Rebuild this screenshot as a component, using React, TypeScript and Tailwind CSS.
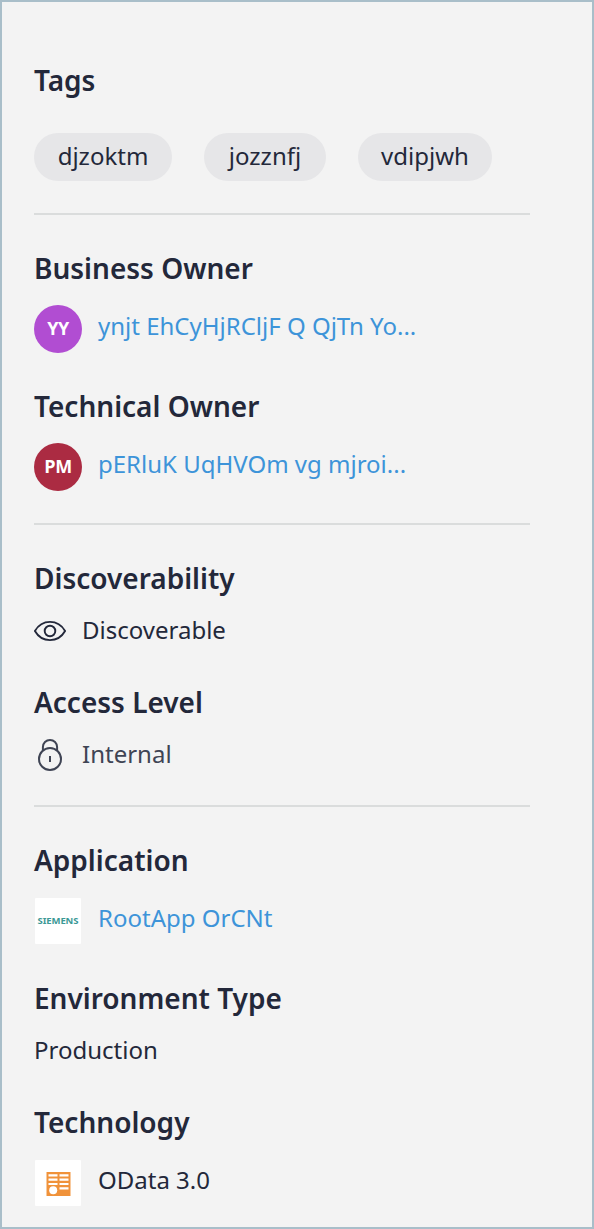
import type { ReactNode } from "react";

function Heading({ children }: { children: ReactNode }) {
  return <h2 className="h-10 text-[28px] leading-10 font-semibold whitespace-nowrap">{children}</h2>;
}

function Divider() {
  return <hr className="h-0.5 w-[496px] border-0 bg-[#dadcdc]" />;
}

function Chip({ label, size }: { label: string; size: string }) {
  return (
    <span className={`flex h-12 items-center justify-center rounded-full bg-[#e6e6e8] pb-[3px] ${size}`}>{label}</span>
  );
}

function Person({ initials, name, color }: { initials: string; name: string; color: string }) {
  return (
    <div className="mt-[17px] flex h-12 items-center gap-4">
      <span
        className={`flex size-12 items-center justify-center rounded-full pb-[3px] font-['Open_Sans',sans-serif] text-[18px] font-bold tracking-[-0.4px] text-white ${color}`}
      >
        {initials}
      </span>
      <a className="pb-[6px] whitespace-nowrap text-[#3d94d9]">{name}</a>
    </div>
  );
}

function EyeIcon() {
  return (
    <svg className="size-8" viewBox="0 0 32 32" fill="none" stroke="currentColor" strokeWidth="1.9">
      <path d="M.9 16C4.400 10 10 6.900 16 6.900S27.600 10 31.100 16C27.600 22 22 25.100 16 25.100S4.400 22 .9 16Z" strokeLinejoin="round" />
      <circle cx="16" cy="16" r="5.300" />
    </svg>
  );
}

function LockIcon() {
  return (
    <svg className="size-8" viewBox="0 0 32 32" fill="none" stroke="currentColor" strokeWidth="2">
      <circle cx="16" cy="20" r="11" />
      <path d="M8.900 11.800V8.100A7.100 7.100 0 0 1 23.100 8.100V11.800" />
      <path d="M16 17v6" />
    </svg>
  );
}

function ODataIcon() {
  return (
    <svg className="h-6 w-[25px]" viewBox="0 0 25 24">
      <path fill="#f0923a" d="M.5 0h24v24H.5z" />
      <path
        fill="#fff"
        d="M2.500 2.300h9v2.200h-9zM13.500 2.300h9v2.200h-9zM2.500 6.600h9v2.200h-9zM13.500 6.600h9v2.200h-9zM2.500 10.900h9v2.200h-9zM13.500 10.900h9v2.200h-9zM13.500 15.300h9v2.200h-9z"
      />
      <circle cx="7.200" cy="18.300" r="4" fill="#fff" />
    </svg>
  );
}

export default function App() {
  return (
    <aside className="h-[1229px] w-[594px] overflow-hidden border-2 border-[#a9bec9] bg-[#f3f3f3] pt-[58px] pl-8 font-['Noto_Sans',sans-serif] text-[24px] leading-8 text-[#23283a]">
      <Heading>Tags</Heading>
      <div className="mt-[33px] mb-8 flex gap-8">
        <Chip label="djzoktm" size="w-[138px]" />
        <Chip label="jozznfj" size="w-[122px]" />
        <Chip label="vdipjwh" size="w-[134px]" />
      </div>
      <Divider />

      <section className="mt-[33px] mb-8">
        <Heading>Business Owner</Heading>
        <Person initials="YY" name="ynjt EhCyHjRCljF Q QjTn Yo..." color="bg-[#b14dd2]" />
        <div className="h-[33px]" />
        <Heading>Technical Owner</Heading>
        <Person initials="PM" name="pERluK UqHVOm vg mjroi..." color="bg-[#ab2b42]" />
      </section>
      <Divider />

      <section className="mt-[33px] mb-[34px]">
        <Heading>Discoverability</Heading>
        <div className="mt-[17px] mb-[35px] flex h-8 items-center gap-4">
          <EyeIcon />
          <span className="pb-[2px]">Discoverable</span>
        </div>
        <Heading>Access Level</Heading>
        <div className="mt-[17px] flex h-8 items-center gap-4 text-[#3f4454]">
          <LockIcon />
          <span className="pb-[2px]">Internal</span>
        </div>
      </section>
      <Divider />

      <section className="mt-[33px]">
        <Heading>Application</Heading>
        <div className="mt-[18px] mb-[34px] ml-px flex h-[46px] items-center gap-[17px]">
          <span className="flex size-[46px] items-center justify-center rounded-[1px] bg-white text-[9.500px] font-bold tracking-[-0.1px] text-[#3b9896]">
            SIEMENS
          </span>
          <a className="pb-[6px] text-[#3d94d9]">RootApp OrCNt</a>
        </div>
        <Heading>Environment Type</Heading>
        <p className="mt-4 mb-9 h-8">Production</p>
        <Heading>Technology</Heading>
        <div className="mt-[18px] ml-px flex h-[46px] items-center gap-[17px]">
          <span className="flex size-[46px] items-center justify-center rounded-[1px] bg-white pt-0.5">
            <ODataIcon />
          </span>
          <span className="pb-[6px]">OData 3.0</span>
        </div>
      </section>
    </aside>
  );
}
